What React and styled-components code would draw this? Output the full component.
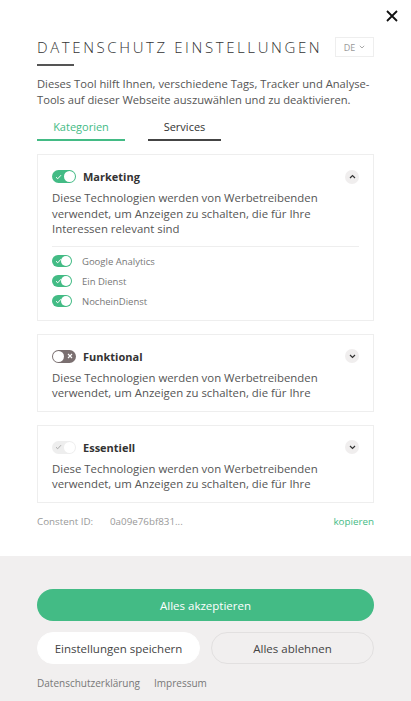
import styled, { createGlobalStyle } from "styled-components";

const GlobalStyle = createGlobalStyle`
  body {
    margin: 0;
    font-family: "Open Sans", "DejaVu Sans", sans-serif;
    background: #ffffff;
    color: #555;
  }
  * { box-sizing: border-box; }
`;

const GREEN = "#43bb85";

const categories = [
  {
    name: "Marketing",
    state: "on",
    open: true,
    text: "Diese Technologien werden von Werbetreibenden verwendet, um Anzeigen zu schalten, die für Ihre Interessen relevant sind",
    services: ["Google Analytics", "Ein Dienst", "NocheinDienst"],
  },
  {
    name: "Funktional",
    state: "off",
    text: "Diese Technologien werden von Werbetreibenden verwendet, um Anzeigen zu schalten, die für Ihre",
  },
  {
    name: "Essentiell",
    state: "locked",
    text: "Diese Technologien werden von Werbetreibenden verwendet, um Anzeigen zu schalten, die für Ihre",
  },
];

const Toggle = ({ state, small }) => (
  <Switch $state={state} $small={small}>
    <Mark $state={state}>
      {state === "off" ? (
        <svg width="6" height="6" viewBox="0 0 6 6">
          <path d="M1 1L5 5M5 1L1 5" stroke="#fff" strokeWidth="1.1" />
        </svg>
      ) : (
        <svg width="7" height="6" viewBox="0 0 7 6">
          <path d="M1 3.2L2.7 4.8L6 1.2" fill="none" stroke={state === "locked" ? "#aaa" : "#fff"} strokeWidth="1" />
        </svg>
      )}
    </Mark>
    <Knob $state={state} $small={small} />
  </Switch>
);

const Chevron = ({ up }) => (
  <ChevronBtn>
    <svg width="7" height="5" viewBox="0 0 7 5">
      <path d={up ? "M1 4L3.5 1.5L6 4" : "M1 1L3.5 3.5L6 1"} fill="none" stroke="#333" strokeWidth="1.2" />
    </svg>
  </ChevronBtn>
);

const App = () => {
  return (
    <>
      <GlobalStyle />
      <Page>
        <Main>
          <CloseRow>
            <svg width="12" height="12" viewBox="0 0 12 12">
              <path d="M1 1L11 11M11 1L1 11" stroke="#111" strokeWidth="1.8" />
            </svg>
          </CloseRow>
          <Header>
            <Title>DATENSCHUTZ EINSTELLUNGEN</Title>
            <Lang>
              DE
              <svg width="6" height="4" viewBox="0 0 6 4">
                <path d="M0.8 0.8L3 3L5.2 0.8" fill="none" stroke="#aaa" strokeWidth="1" />
              </svg>
            </Lang>
          </Header>
          <TitleBar />
          <Intro>
            Dieses Tool hilft Ihnen, verschiedene Tags, Tracker und Analyse-Tools auf dieser Webseite auszuwählen und zu deaktivieren.
          </Intro>
          <Tabs>
            <Tab $active $w="88px">Kategorien</Tab>
            <Tab $w="73px">Services</Tab>
          </Tabs>
          {categories.map((c) => (
            <Card key={c.name}>
              <CardHead>
                <Toggle state={c.state} />
                <CardTitle>{c.name}</CardTitle>
                <Chevron up={c.open} />
              </CardHead>
              <CardText>{c.text}</CardText>
              {c.services && (
                <ServiceList>
                  {c.services.map((s) => (
                    <ServiceRow key={s}>
                      <Toggle state="on" small />
                      <ServiceName>{s}</ServiceName>
                    </ServiceRow>
                  ))}
                </ServiceList>
              )}
            </Card>
          ))}
          <ConsentRow>
            <ConsentLabel>Constent ID:</ConsentLabel>
            <ConsentId>0a09e76bf831...</ConsentId>
            <CopyLink>kopieren</CopyLink>
          </ConsentRow>
        </Main>
        <Footer>
          <AcceptBtn>Alles akzeptieren</AcceptBtn>
          <BtnRow>
            <SecondaryBtn $filled>Einstellungen speichern</SecondaryBtn>
            <SecondaryBtn>Alles ablehnen</SecondaryBtn>
          </BtnRow>
          <Links>
            <span>Datenschutzerklärung</span>
            <span>Impressum</span>
          </Links>
        </Footer>
      </Page>
    </>
  );
};

const Page = styled.div`
  width: 411px;
  min-height: 701px;
  display: flex;
  flex-direction: column;
`;

const Main = styled.div`
  padding: 10px 37px 0 37px;
  height: 556px;
`;

const CloseRow = styled.div`
  display: flex;
  justify-content: flex-end;
  margin-right: -24px;
  height: 16px;
`;

const Header = styled.div`
  display: flex;
  align-items: center;
  justify-content: space-between;
  margin-top: 11px;
`;

const Title = styled.h1`
  margin: 0;
  font-size: 15px;
  font-weight: 300;
  letter-spacing: 2.6px;
  color: #333;
  line-height: 20px;
`;

const Lang = styled.div`
  width: 39px;
  height: 20px;
  border: 1px solid #eee;
  display: flex;
  align-items: center;
  justify-content: center;
  gap: 4px;
  font-size: 9px;
  color: #999;
`;

const TitleBar = styled.div`
  width: 37px;
  height: 2px;
  background: #555;
  margin-top: 7px;
`;

const Intro = styled.p`
  margin: 10px 0 0;
  font-size: 11.2px;
  line-height: 16px;
  color: #555;
`;

const Tabs = styled.div`
  display: flex;
  gap: 23px;
  margin-top: 12px;
`;

const Tab = styled.div`
  width: ${(p) => p.$w};
  text-align: center;
  font-size: 11px;
  line-height: 14px;
  padding-bottom: 5px;
  color: ${(p) => (p.$active ? GREEN : "#333")};
  border-bottom: 2px solid ${(p) => (p.$active ? GREEN : "#444")};
`;

const Card = styled.div`
  border: 1px solid #eee;
  padding: 14px 14px 10px 14px;
  margin-top: 13px;
  &:first-of-type { margin-top: 0; }
`;

const CardHead = styled.div`
  display: flex;
  align-items: center;
  gap: 7px;
`;

const CardTitle = styled.div`
  flex: 1;
  font-size: 11px;
  font-weight: 700;
  color: #333;
`;

const ChevronBtn = styled.div`
  width: 14px;
  height: 14px;
  border-radius: 50%;
  background: #f0eeee;
  display: flex;
  align-items: center;
  justify-content: center;
`;

const Switch = styled.div`
  position: relative;
  width: ${(p) => (p.$small ? "20px" : "24px")};
  height: ${(p) => (p.$small ? "12px" : "13px")};
  border-radius: 7px;
  background: ${(p) => (p.$state === "on" ? GREEN : p.$state === "off" ? "#7a6f70" : "#eeeeee")};
  flex-shrink: 0;
`;

const Mark = styled.div`
  position: absolute;
  top: 0;
  bottom: 0;
  display: flex;
  align-items: center;
  ${(p) => (p.$state === "off" ? "right: 3px;" : "left: 3px;")}
`;

const Knob = styled.div`
  position: absolute;
  top: 1px;
  width: ${(p) => (p.$small ? "10px" : "11px")};
  height: ${(p) => (p.$small ? "10px" : "11px")};
  border-radius: 50%;
  background: #fff;
  ${(p) => (p.$state === "off" ? "left: 1px;" : "right: 1px;")}
`;

const CardText = styled.p`
  margin: 6px 0 0;
  font-size: 11.4px;
  line-height: 15.5px;
  color: #555;
`;

const ServiceList = styled.div`
  border-top: 1px solid #eee;
  margin-top: 9px;
  padding-top: 8px;
  padding-bottom: 2px;
  display: flex;
  flex-direction: column;
  gap: 7px;
`;

const ServiceRow = styled.div`
  display: flex;
  align-items: center;
  gap: 10px;
`;

const ServiceName = styled.span`
  font-size: 9.5px;
  color: #777;
`;

const ConsentRow = styled.div`
  display: flex;
  margin-top: 12px;
  font-size: 9.8px;
  color: #999;
`;

const ConsentLabel = styled.span`
  width: 73px;
`;

const ConsentId = styled.span`
  flex: 1;
`;

const CopyLink = styled.span`
  color: ${GREEN};
`;

const Footer = styled.div`
  flex: 1;
  background: #f1efef;
  padding: 33px 37px 12px;
  display: flex;
  flex-direction: column;
`;

const AcceptBtn = styled.button`
  height: 32px;
  border: none;
  border-radius: 16px;
  background: ${GREEN};
  color: #fff;
  font-family: inherit;
  font-size: 11.5px;
`;

const BtnRow = styled.div`
  display: flex;
  gap: 11px;
  margin-top: 11px;
`;

const SecondaryBtn = styled.button`
  flex: 1;
  height: 32px;
  border-radius: 16px;
  border: 1px solid ${(p) => (p.$filled ? "#fff" : "#e2e0e0")};
  background: ${(p) => (p.$filled ? "#fff" : "transparent")};
  color: #444;
  font-family: inherit;
  font-size: 11.5px;
`;

const Links = styled.div`
  display: flex;
  gap: 14px;
  margin-top: 12px;
  font-size: 10px;
  color: #777;
`;

export default App;
